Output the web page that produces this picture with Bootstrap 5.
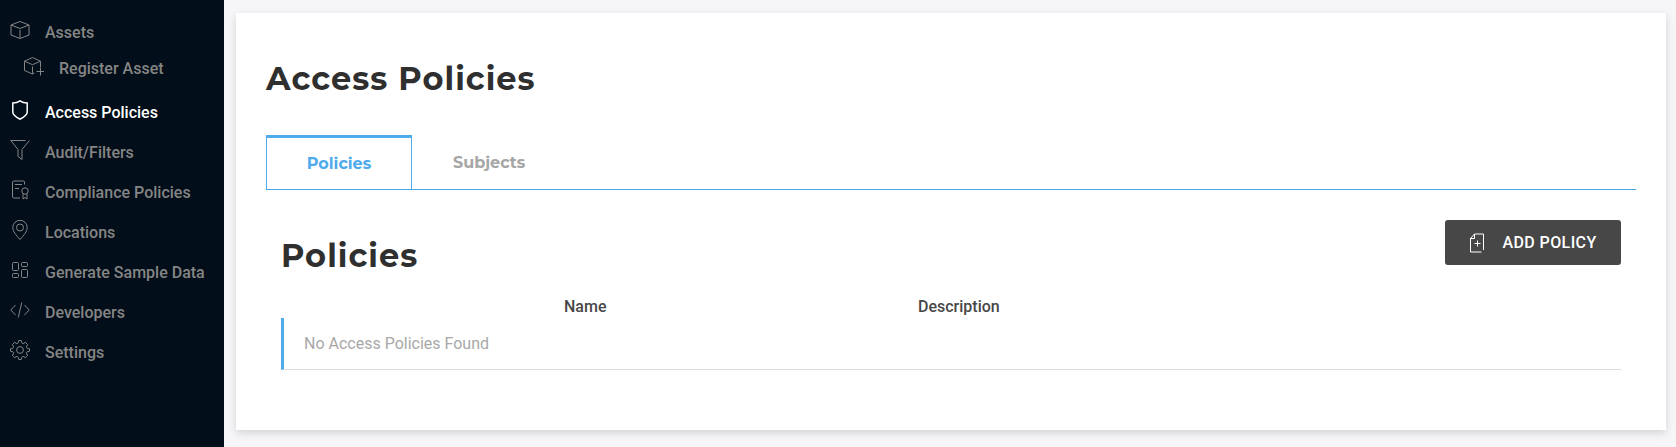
<!DOCTYPE html>
<html lang="en">
<head>
<meta charset="utf-8">
<title>Access Policies</title>
<link href="https://cdn.jsdelivr.net/npm/bootstrap@5.3.0/dist/css/bootstrap.min.css" rel="stylesheet">
<style>
body{background:#f6f6f9;font-family:Roboto,sans-serif;font-size:16px;height:447px;overflow:hidden}
.side{width:224px;background:#020e19;padding-top:12px}
.side .nav-link{height:40px;padding:1px 0 0 10px;color:#858585;font-weight:500;line-height:24px;white-space:nowrap}
.side .nav-link svg{width:20px;height:20px;margin:0 15px 6px 0;flex:none}
.side .nav-link.sub{height:32px;margin-bottom:8px;padding-left:24px}
.side .nav-link.sub svg{margin-right:15px;margin-bottom:5px}
.side .nav-link.active{color:#fff}
svg{fill:none;stroke:currentColor;stroke-width:1}
.panel{margin:13px 10px 17px 12px;padding:46px 30px 0;background:#fff;box-shadow:0 3px 8px rgba(0,0,0,.14)}
.panel h1,.panel h2{font-family:Montserrat,Inter,sans-serif;font-size:32px;font-weight:700;line-height:40px;color:#2f2f2f;margin:0;letter-spacing:1.05px}
.panel h2{padding-top:16px}
.tabs{margin-top:36px;height:55px;border-bottom:1px solid #4aa5e5}
.tabs a{font-family:Montserrat,Inter,sans-serif;font-weight:700;font-size:16px;text-decoration:none;color:#a6a6a6;height:54px;padding:2px 0 0 41px}
.tabs a.on{width:146px;padding:0;color:#4fabec;border:1px solid #4fabec;border-top-width:3px;border-bottom:0}
.section{padding:30px 15px 0}
.add{width:176px;height:45px;background:#474747;color:#fff;border-radius:3px;border:0;font-size:16px;font-weight:500;letter-spacing:.4px;padding:0 0 0 22px}
.add svg{width:20px;height:20px;margin-right:15.5px}
.heads{height:42px;padding:19px 0 0;color:#474747;font-weight:500;line-height:24px}
.heads .c1{width:283px}.heads .c2{width:354px}
.empty{height:52px;border-left:3px solid #4fabec;border-bottom:1px solid #dcdcdc;padding:0 20px;color:#a8a8a8}
</style>
<script src="https://cdn.jsdelivr.net/npm/bootstrap@5.3.0/dist/js/bootstrap.bundle.min.js"></script>
</head>
<body class="d-flex">
<nav class="side nav flex-column flex-nowrap flex-shrink-0">
<a class="nav-link d-flex align-items-center"><svg viewBox="0 0 20 20"><path d="M10 1.5 19 5v10l-9 3.5L1 15V5zM1 5l9 3.5L19 5M10 10v8"/></svg>Assets</a>
<a class="nav-link sub d-flex align-items-center"><svg viewBox="0 0 20 20"><path d="M16.5 11V5.200L8.500 1.500.5 5.200v9.300l8 3.500 2-1M.5 5.200l8 3.500 8-3.500M8.500 10.500v7M16.500 11.500v8M12.500 15.500h8"/></svg>Register Asset</a>
<a class="nav-link active d-flex align-items-center"><svg viewBox="0 0 20 20"><path style="stroke-width:1.500" d="M10 .8C8 2.300 5.500 3 2.800 3v9c0 3.500 4 5.500 7.200 7.200 3.200-1.700 7.200-3.700 7.200-7.200V3C14.500 3 12 2.300 10 .8z"/></svg>Access Policies</a>
<a class="nav-link d-flex align-items-center"><svg viewBox="0 0 20 20"><path d="M15.500.5H.8l7.200 9v7l4 3V9.500L19.500.5"/></svg>Audit/Filters</a>
<a class="nav-link d-flex align-items-center"><svg viewBox="0 0 20 20"><path d="M14.500 4.500v-3l-1-.5H3.500l-1 1v15l1 1H10M5 4.500h7M5 8.500h4M13 14v5l2-1.500 2 1.500v-5"/><circle cx="15" cy="11" r="3.200"/></svg>Compliance Policies</a>
<a class="nav-link d-flex align-items-center"><svg viewBox="0 0 20 20"><path d="M10 19.500C6 15 2.800 11.500 2.800 7.500a7.200 7.200 0 0 1 14.400 0c0 4-3.200 7.500-7.200 12z"/><circle cx="10" cy="7.500" r="3.500"/></svg>Locations</a>
<a class="nav-link d-flex align-items-center"><svg viewBox="0 0 20 20"><rect x="2.500" y="2.500" width="6" height="8" rx="1"/><rect x="11.500" y="2.500" width="6" height="4" rx="1"/><rect x="2.500" y="13.500" width="6" height="4" rx="1"/><rect x="11.500" y="9.500" width="6" height="8" rx="1"/></svg>Generate Sample Data</a>
<a class="nav-link d-flex align-items-center"><svg viewBox="0 0 20 20"><path d="M5.500 5 .8 10l4.700 5M14.500 5l4.700 5-4.700 5M11.800 2.500 8.200 17.500"/></svg>Developers</a>
<a class="nav-link d-flex align-items-center"><svg viewBox="0 0 20 20"><path d="M8.800.5h2.400l.6 2.300q.4.900 1.300.8l2.300-1.200 2.200 2.200-1.200 2.300q-.1.900.8 1.300l2.300.6v2.400l-2.300.6q-.9.400-.8 1.300l1.200 2.300-2.200 2.200-2.300-1.200q-.9-.1-1.300.8l-.6 2.300H8.800l-.6-2.300q-.4-.9-1.300-.8l-2.300 1.200-2.200-2.200 1.200-2.300q.1-.9-.8-1.300L.5 11.200V8.800l2.300-.6q.9-.4.8-1.300L2.400 4.600l2.200-2.200 2.300 1.200q.9.100 1.300-.8z"/><circle cx="10" cy="10" r="3.400"/></svg>Settings</a>
</nav>
<main class="panel flex-grow-1">
<h1>Access Policies</h1>
<div class="tabs d-flex"><a class="on d-flex align-items-center justify-content-center">Policies</a><a class="d-flex align-items-center">Subjects</a></div>
<section class="section">
<div class="d-flex justify-content-between align-items-start"><h2>Policies</h2><button class="btn add d-flex align-items-center"><svg viewBox="0 0 20 20"><path d="M3.500 5.500 7.500 1h9v16M3.500 5v14h11M3.500 5.500h4V1M10.500 7.500v6M7.500 10.500h6"/></svg>ADD POLICY</button></div>
<div class="heads d-flex"><div class="c1"></div><div class="c2">Name</div><div>Description</div></div>
<div class="empty d-flex align-items-center">No Access Policies Found</div>
</section>
</main>
</body>
</html>
